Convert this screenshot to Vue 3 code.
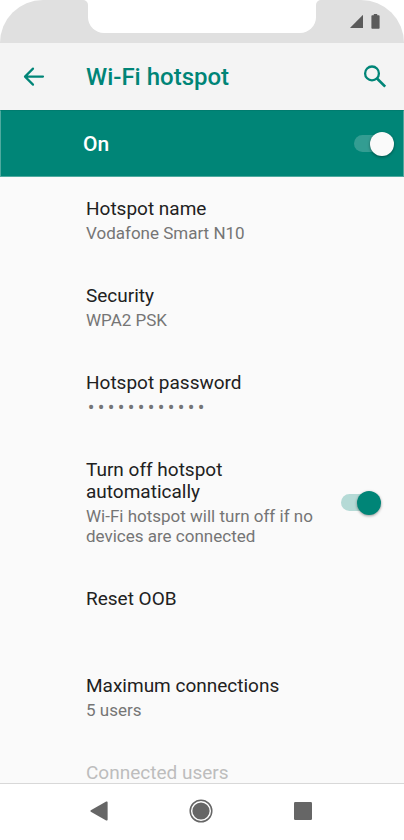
<script setup>
import { ref } from 'vue'

const hotspotOn = ref(true)
const autoOff = ref(true)
const passwordLength = 12
</script>

<template>
  <div class="screen">
    <div class="status">
      <div class="shoulder left"></div>
      <div class="notch-cell"><div class="notch"></div></div>
      <div class="shoulder right">
        <svg class="signal" viewBox="0 0 13 13" aria-hidden="true">
          <path d="M13 0V13H0.6Q0 13 0.4 12.5L12.3 0.4Q12.7 0 13 0Z" fill="#5b5b5b" />
        </svg>
        <svg class="battery" viewBox="0 0 9 15" aria-hidden="true">
          <path d="M2.7 0.6Q2.7 0 3.3 0H5.7Q6.3 0 6.3 0.6V1.2H7.8Q8.6 1.2 8.6 2V14Q8.6 14.8 7.8 14.8H1.2Q0.4 14.8 0.4 14V2Q0.4 1.2 1.2 1.2H2.7Z" fill="#5b5b5b" />
        </svg>
      </div>
    </div>

    <header class="appbar">
      <button class="icon-btn" type="button" aria-label="Back">
        <svg width="24" height="24" viewBox="0 0 24 24" fill="none" stroke="#008577" stroke-width="2.2" stroke-linecap="round" stroke-linejoin="round">
          <path d="M21 11.6H3M11 3.6L3 11.6L11 19.6" />
        </svg>
      </button>
      <h1>Wi-Fi hotspot</h1>
      <button class="icon-btn" type="button" aria-label="Search">
        <svg width="24" height="24" viewBox="0 0 24 24" fill="none" stroke="#008577">
          <circle cx="9" cy="8.4" r="6.9" stroke-width="2.3" />
          <path d="M13.8 13.2L22.2 21.6" stroke-width="2.7" />
        </svg>
      </button>
    </header>

    <label class="banner">
      <span>On</span>
      <input v-model="hotspotOn" class="switch light" type="checkbox" role="switch" />
    </label>

    <main class="list">
      <button class="row" type="button">
        <span class="title">Hotspot name</span>
        <span class="desc">Vodafone Smart N10</span>
      </button>
      <button class="row" type="button">
        <span class="title">Security</span>
        <span class="desc">WPA2 PSK</span>
      </button>
      <button class="row" type="button">
        <span class="title">Hotspot password</span>
        <span class="desc dots"><span v-for="n in passwordLength" :key="n">•</span></span>
      </button>
      <label class="row with-switch">
        <span class="text">
          <span class="title">Turn off hotspot automatically</span>
          <span class="desc">Wi-Fi hotspot will turn off if no devices are connected</span>
        </span>
        <input v-model="autoOff" class="switch" type="checkbox" role="switch" />
      </label>
      <button class="row" type="button">
        <span class="title">Reset OOB</span>
      </button>
      <button class="row" type="button">
        <span class="title">Maximum connections</span>
        <span class="desc">5 users</span>
      </button>
      <button class="row" type="button" disabled>
        <span class="title">Connected users</span>
      </button>
    </main>

    <nav class="navbar">
      <button type="button" aria-label="Back">
        <svg width="24" height="24" viewBox="0 0 24 24">
          <path d="M3.8 11.3L19.2 2.6Q20.6 2 20.6 3.4V20.6Q20.6 22 19.2 21.4L3.8 12.7Q2.8 12 3.8 11.3Z" fill="#666" />
        </svg>
      </button>
      <button type="button" aria-label="Home">
        <svg width="24" height="24" viewBox="0 0 24 24">
          <circle cx="12" cy="12" r="10.8" fill="none" stroke="#666" stroke-width="1.5" />
          <circle cx="12" cy="12" r="8.6" fill="#666" />
        </svg>
      </button>
      <button type="button" aria-label="Recent apps">
        <svg width="24" height="24" viewBox="0 0 24 24">
          <rect x="3" y="3" width="18" height="18" rx="1.2" fill="#666" />
        </svg>
      </button>
    </nav>
  </div>
</template>

<style>
body {
  background: #fff;
}
</style>

<style scoped>
.screen {
  display: flex;
  flex-direction: column;
  height: 100vh;
  overflow: hidden;
  font-family: Roboto, sans-serif;
  color: #212121;
}

button {
  border: 0;
  padding: 0;
  background: none;
  font: inherit;
  color: inherit;
}

svg {
  display: block;
}

.status {
  display: grid;
  grid-template-columns: 88px 1fr 88px;
  flex: none;
  height: 43px;
}

.shoulder {
  background: #e0e0e0;
}

.left {
  border-radius: 43px 5px 0 0;
}

.right {
  display: flex;
  gap: 8px;
  justify-content: flex-end;
  align-items: flex-start;
  padding: 14px 24px 0 0;
  border-radius: 5px 43px 0 0;
}

.signal {
  width: 13px;
  height: 13px;
  margin-top: 1px;
}

.battery {
  width: 9px;
  height: 15px;
}

.notch-cell {
  background: linear-gradient(#fff 17px, #e0e0e0 17px);
}

.notch {
  height: 33px;
  border-radius: 0 0 16px 16px;
  background: #fff;
}

.appbar {
  display: flex;
  flex: none;
  align-items: center;
  height: 67px;
  padding: 0 17px 0 22px;
  background: #f4f4f4;
}

.appbar h1 {
  flex: 1;
  margin: 0 0 0 40px;
  font-size: 24px;
  line-height: 28px;
  font-weight: 500;
  color: #008577;
}

.banner {
  display: flex;
  flex: none;
  align-items: center;
  justify-content: space-between;
  box-sizing: border-box;
  height: 67px;
  padding: 0 9px 0 82px;
  border: 1px solid #4faa9f;
  border-top-color: #007c6f;
  background: #008577;
  color: #fff;
  font-size: 21px;
  font-weight: 500;
}

.list {
  flex: 1;
  min-height: 0;
  overflow: hidden;
  background: #fafafa;
}

.row {
  display: block;
  box-sizing: border-box;
  width: 100%;
  min-height: 87px;
  padding: 21px 23px 21px 86px;
  text-align: left;
}

button.row {
  display: flex;
  flex-direction: column;
  align-items: flex-start;
}

.with-switch {
  display: flex;
  align-items: center;
  justify-content: space-between;
}

.text {
  max-width: 228px;
}

.title,
.desc {
  display: block;
}

.title {
  font-size: 19px;
  line-height: 22px;
}

.desc {
  margin-top: 3px;
  font-size: 17px;
  line-height: 20px;
  color: #757575;
}

.dots {
  display: grid;
  grid-auto-flow: column;
  grid-auto-columns: 10px;
  text-align: center;
  font-size: 20px;
}

.row:disabled {
  color: #bdbdbd;
}

.switch {
  appearance: none;
  display: flex;
  align-items: center;
  flex: none;
  width: 40px;
  height: 24px;
  margin: 0;
}

.switch::before {
  content: "";
  width: 28px;
  height: 17px;
  border-radius: 9px 0 0 9px;
  background: #b5dad6;
}

.switch::after {
  content: "";
  flex: none;
  width: 24px;
  height: 24px;
  margin-left: -12px;
  border-radius: 50%;
  background: #008577;
  box-shadow: 0 1px 3px rgba(0, 0, 0, 0.4);
}

.light::before {
  background: #339d92;
}

.light::after {
  background: #fafafa;
}

.switch:not(:checked) {
  flex-direction: row-reverse;
}

.navbar {
  display: flex;
  flex: none;
  justify-content: center;
  align-items: center;
  gap: 78px;
  height: 54px;
  padding: 0 2px 2px 0;
  border-top: 1px solid #d8d8d8;
  background: #fff;
}
</style>
